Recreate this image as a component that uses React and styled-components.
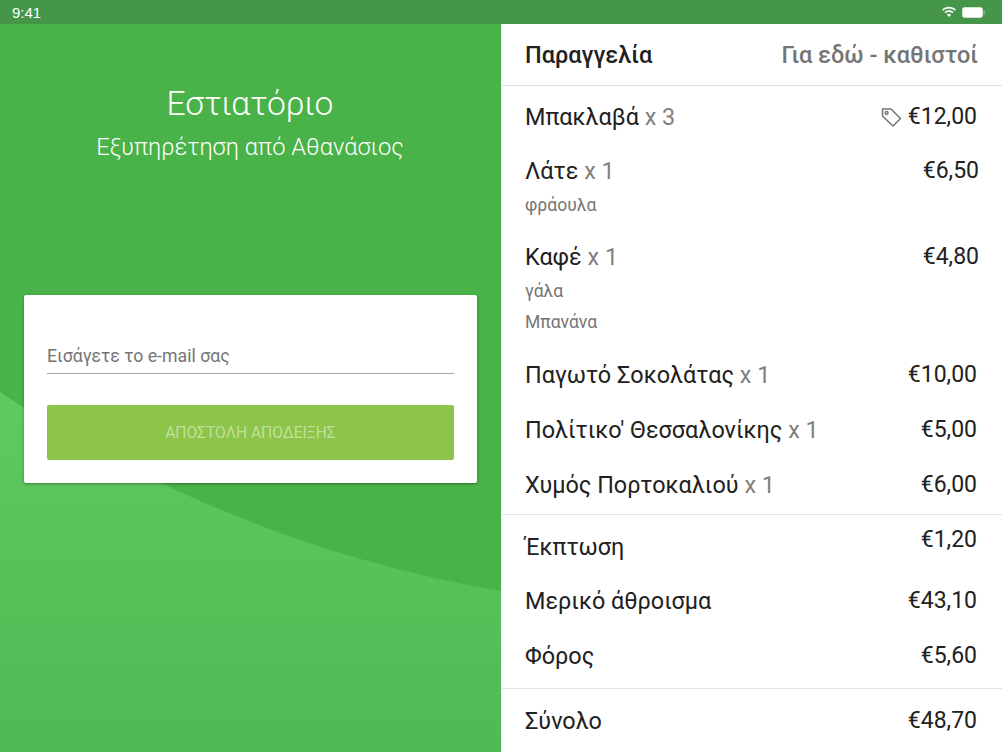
import styled, { createGlobalStyle } from "styled-components"

const Global = createGlobalStyle`
  html, body { margin: 0; padding: 0; }
  body { font-family: Roboto, "Noto Sans", sans-serif; background: #fff; }
`;

const Screen = styled.div`
  width: 1002px;
  height: 752px;
  overflow: hidden;
  display: flex;
  flex-direction: column;
`;

const StatusBar = styled.div`
  height: 24px;
  flex: none;
  background: #46964a;
  color: #fff;
  display: flex;
  align-items: center;
  justify-content: space-between;
  padding: 0 17px 0 12px;
  font-size: 15px;
  font-family: "Liberation Sans", sans-serif;
`;

const StatusIcons = styled.div`
  display: flex;
  align-items: center;
  gap: 5px;
`;

const Body = styled.div`
  flex: 1;
  display: flex;
  min-height: 0;
`;

const Left = styled.div`
  position: relative;
  width: 501px;
  flex: none;
  background: #49b248;
  display: flex;
  flex-direction: column;
  align-items: center;
`;

const Wave = styled.svg`
  position: absolute;
  left: 0;
  top: 0;
`;

const Heading = styled.div`
  position: relative;
  margin-top: 58px;
  padding-right: 1px;
  color: #fff;
  text-align: center;
`;

const Name = styled.div`
  font-size: 33.6px;
  line-height: 44px;
  font-weight: 300;
`;

const Waiter = styled.div`
  font-size: 23.7px;
  line-height: 42px;
  font-weight: 300;
`;

const Card = styled.div`
  position: relative;
  margin-top: 127px;
  width: 453px;
  height: 188px;
  box-sizing: border-box;
  padding: 47px 23px 0;
  background: #fff;
  border-radius: 2px;
  box-shadow: 0 1px 3px rgba(0, 0, 0, 0.35);
`;

const EmailField = styled.div`
  height: 32px;
  box-sizing: border-box;
  border-bottom: 1px solid #a8a8a8;
  color: #757575;
  font-size: 17.7px;
  line-height: 28px;
`;

const SendButton = styled.div`
  margin-top: 31px;
  height: 55px;
  background: #8dc44a;
  border-radius: 2px;
  color: #c0e09a;
  font-size: 15.6px;
  display: flex;
  align-items: center;
  justify-content: center;
`;

const Right = styled.div`
  flex: 1;
  background: #fff;
  display: flex;
  flex-direction: column;
  border-left: 1px solid #eefaee;
`;

const Header = styled.div`
  height: 62px;
  flex: none;
  box-sizing: border-box;
  border-bottom: 1px solid #dedede;
  padding: 0 24px 0 23px;
  display: flex;
  align-items: center;
  justify-content: space-between;
  font-size: 23.5px;
  font-weight: 500;
`;

const HeaderTitle = styled.span`
  color: #212121;
`;

const HeaderType = styled.span`
  color: #757575;
`;

const Section = styled.div`
  padding: ${p => p.$pad || "0"};
  border-bottom: ${p => (p.$line ? "1px solid #e4e4e4" : "none")};
`;

const Row = styled.div`
  display: flex;
  justify-content: space-between;
  align-items: flex-start;
  padding: 0 ${p => p.$right || 25}px 0 23px;
  height: ${p => p.$h || 55}px;
  line-height: 30px;
  font-size: 23.4px;
  color: #212121;
`;

const Qty = styled.span`
  color: #808080;
`;

const Label = styled.span`
  position: relative;
  top: ${p => p.$shift || 0}px;
`;

const Price = styled.span`
  display: flex;
  align-items: center;
  gap: 5px;
  font-size: 23px;
`;

const Note = styled.div`
  padding-left: 23px;
  height: 31px;
  line-height: 31px;
  font-size: 17.5px;
  color: #757575;
`;

const TagIcon = () => (
  <svg width="22" height="22" viewBox="0 0 22 22" fill="none" stroke="#757575" strokeWidth="1.5" strokeLinejoin="round">
    <path d="M1.5 3h8.5l9.5 9.5-7.5 7.5L1.5 10z" />
    <circle cx="5.6" cy="7" r="1.4" />
  </svg>
);

const WifiIcon = () => (
  <svg width="16" height="12" viewBox="0 0 16 12" fill="#fff">
    <path d="M8 2.4c2.2 0 4.2.9 5.7 2.3l1.1-1.2C13 1.8 10.6.8 8 .8S3 1.8 1.2 3.5l1.1 1.2C3.8 3.3 5.8 2.4 8 2.4z" />
    <path d="M8 5.9c1.2 0 2.4.5 3.3 1.3l1.1-1.2C11.2 4.9 9.7 4.3 8 4.3s-3.2.6-4.4 1.7l1.1 1.2C5.6 6.4 6.8 5.9 8 5.9z" />
    <path d="M8 7.8c-.9 0-1.6.3-2.2.8L8 11l2.2-2.4c-.6-.5-1.3-.8-2.2-.8z" />
  </svg>
);

const BatteryIcon = () => (
  <svg width="23" height="11" viewBox="0 0 23 11">
    <rect x="0.5" y="0.5" width="20" height="10" rx="2" fill="#fff" stroke="#fff" strokeOpacity="0.5" />
    <rect x="21.5" y="3.5" width="1.2" height="4" rx="0.6" fill="#fff" fillOpacity="0.5" />
  </svg>
);

const items = [
  { name: "Μπακλαβά", qty: 3, price: "€12,00", tag: true, h: 54 },
  { name: "Λάτε", qty: 1, price: "€6,50", notes: ["φράουλα"], h: 34, gap: 21, right: 23 },
  { name: "Καφέ", qty: 1, price: "€4,80", notes: ["γάλα", "Μπανάνα"], h: 34, gap: 22, right: 23 },
  { name: "Παγωτό Σοκολάτας", qty: 1, price: "€10,00" },
  { name: "Πολίτικο' Θεσσαλονίκης", qty: 1, price: "€5,00" },
  { name: "Χυμός Πορτοκαλιού", qty: 1, price: "€6,00", h: 44 },
];

const App = () => {
  return (
    <Screen>
      <Global />
      <StatusBar>
        <span>9:41</span>
        <StatusIcons>
          <WifiIcon />
          <BatteryIcon />
        </StatusIcons>
      </StatusBar>
      <Body>
        <Left>
          <Wave width="501" height="728" viewBox="0 0 501 728">
            <defs>
              <linearGradient id="wave" x1="0" y1="0" x2="0" y2="1">
                <stop offset="0" stopColor="#5fca61" />
                <stop offset="1" stopColor="#4fba53" />
              </linearGradient>
            </defs>
            <path d="M0 368C110 440 280 530 501 567V728H0z" fill="url(#wave)" />
          </Wave>
          <Heading>
            <Name>Εστιατόριο</Name>
            <Waiter>Εξυπηρέτηση από Αθανάσιος</Waiter>
          </Heading>
          <Card>
            <EmailField>Εισάγετε το e-mail σας</EmailField>
            <SendButton>ΑΠΟΣΤΟΛΗ ΑΠΟΔΕΙΞΗΣ</SendButton>
          </Card>
        </Left>
        <Right>
          <Header>
            <HeaderTitle>Παραγγελία</HeaderTitle>
            <HeaderType>Για εδώ - καθιστοί</HeaderType>
          </Header>
          <Section $pad="16px 0 0" $line>
            {items.map(item => (
              <div key={item.name}>
                <Row $h={item.h} $right={item.right}>
                  <Label>
                    {item.name} <Qty>x {item.qty}</Qty>
                  </Label>
                  <Price>
                    {item.tag && <TagIcon />}
                    {item.price}
                  </Price>
                </Row>
                {item.notes && (
                  <>
                    {item.notes.map(n => <Note key={n}>{n}</Note>)}
                    <Row $h={item.gap} />
                  </>
                )}
              </div>
            ))}
          </Section>
          <Section $pad="10px 0 0" $line>
            <Row $h={61}>
              <Label $shift={7}>Έκπτωση</Label>
              <Price>€1,20</Price>
            </Row>
            <Row $h={55}>
              <Label>Μερικό άθροισμα</Label>
              <Price>€43,10</Price>
            </Row>
            <Row $h={47}>
              <Label>Φόρος</Label>
              <Price>€5,60</Price>
            </Row>
          </Section>
          <Section $pad="17px 0 0">
            <Row>
              <Label>Σύνολο</Label>
              <Price>€48,70</Price>
            </Row>
          </Section>
        </Right>
      </Body>
    </Screen>
  )
}

export default App
